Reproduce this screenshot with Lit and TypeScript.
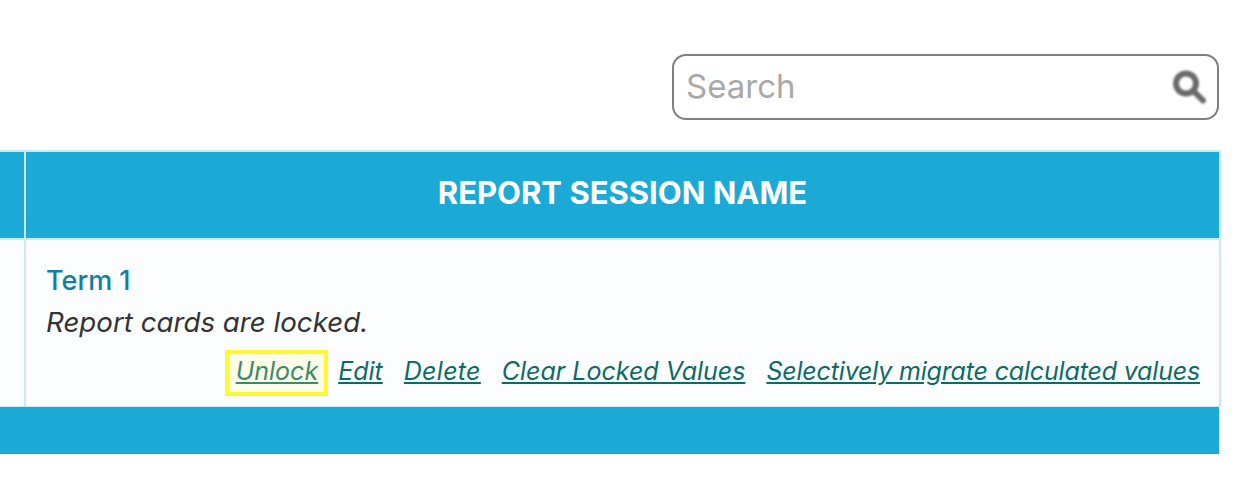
import { LitElement, html, css } from "lit";
import { customElement } from "lit/decorators.js";

@customElement("app-root")
export class AppRoot extends LitElement {
  static styles = css`
    :host {
      --blue: #1ba9d6;
      --rule: #c9e9f4;
      display: block;
      width: 1246px;
      height: 492px;
      overflow: hidden;
      background: #fff;
      font-family: Inter, "Liberation Sans", sans-serif;
      color: #333;
    }
    .search-row {
      display: flex;
      justify-content: flex-end;
      padding: 54px 27px 30px 0;
    }
    .search {
      box-sizing: border-box;
      width: 547px;
      height: 66px;
      border: 2px solid #7f7f7f;
      border-radius: 14px;
      display: flex;
      align-items: center;
      justify-content: space-between;
      padding: 0 10px 2px 12px;
    }
    .search span {
      font-size: 33px;
      color: #a9a9a9;
    }
    .search svg {
      display: block;
      filter: blur(0.9px);
    }
    .table {
      width: 1221px;
      display: grid;
      grid-template-columns: 24px 1fr;
    }
    .head {
      box-sizing: border-box;
      height: 90px;
      background: var(--blue);
      border-top: 2px solid var(--rule);
      border-bottom: 2px solid var(--rule);
    }
    .head.name {
      border-left: 2px solid var(--rule);
      border-right: 2px solid var(--rule);
      display: flex;
      align-items: center;
      justify-content: center;
      padding-bottom: 5px;
      color: #fff;
      font-size: 31px;
      font-weight: 700;
    }
    .cell {
      background: #fbfdff;
      height: 167px;
      box-sizing: border-box;
      border-bottom: 1px solid var(--rule);
    }
    .cell.name {
      border-left: 2px solid var(--rule);
      border-right: 2px solid var(--rule);
      padding: 24px 19px 0 20px;
    }
    .term {
      font-size: 27px;
      line-height: 34px;
      font-weight: 500;
      color: #117fa3;
    }
    .status {
      font-size: 27.7px;
      line-height: 34px;
      margin-top: 7px;
      font-style: italic;
    }
    .actions {
      display: flex;
      justify-content: flex-end;
      align-items: center;
      gap: 21px;
      margin-top: 17px;
      font-size: 25px;
      font-style: italic;
    }
    .actions a {
      color: #0d6b66;
      text-decoration: underline;
    }
    .actions a.long {
      letter-spacing: -0.17px;
    }
    .actions a.wide {
      letter-spacing: 0.3px;
    }
    .actions a.hl {
      color: #3a8a6c;
      background: #fdfde8;
      outline: 4px solid #fdfb2f;
      outline-offset: -4px;
      padding: 6px 10px 10px 11px;
      margin: -6px -11px -10px 0;
    }
    .foot {
      grid-column: 1 / -1;
      width: 1219px;
      height: 47px;
      background: var(--blue);
    }
  `;

  render() {
    return html`
      <div class="search-row">
        <div class="search">
          <span>Search</span>
          <svg width="36" height="36" viewBox="0 0 36 36" fill="none">
            <circle cx="15" cy="15.5" r="10" stroke="#6a6a6a" stroke-width="6" />
            <path d="M24 24.5l8 8" stroke="#6a6a6a" stroke-width="6" stroke-linecap="round" />
          </svg>
        </div>
      </div>
      <div class="table">
        <div class="head"></div>
        <div class="head name">REPORT SESSION NAME</div>
        <div class="cell"></div>
        <div class="cell name">
          <div class="term">Term 1</div>
          <div class="status">Report cards are locked.</div>
          <div class="actions">
            <a class="hl">Unlock</a>
            <a>Edit</a>
            <a class="wide">Delete</a>
            <a>Clear Locked Values</a>
            <a class="long">Selectively migrate calculated values</a>
          </div>
        </div>
        <div class="foot"></div>
      </div>
    `;
  }
}
